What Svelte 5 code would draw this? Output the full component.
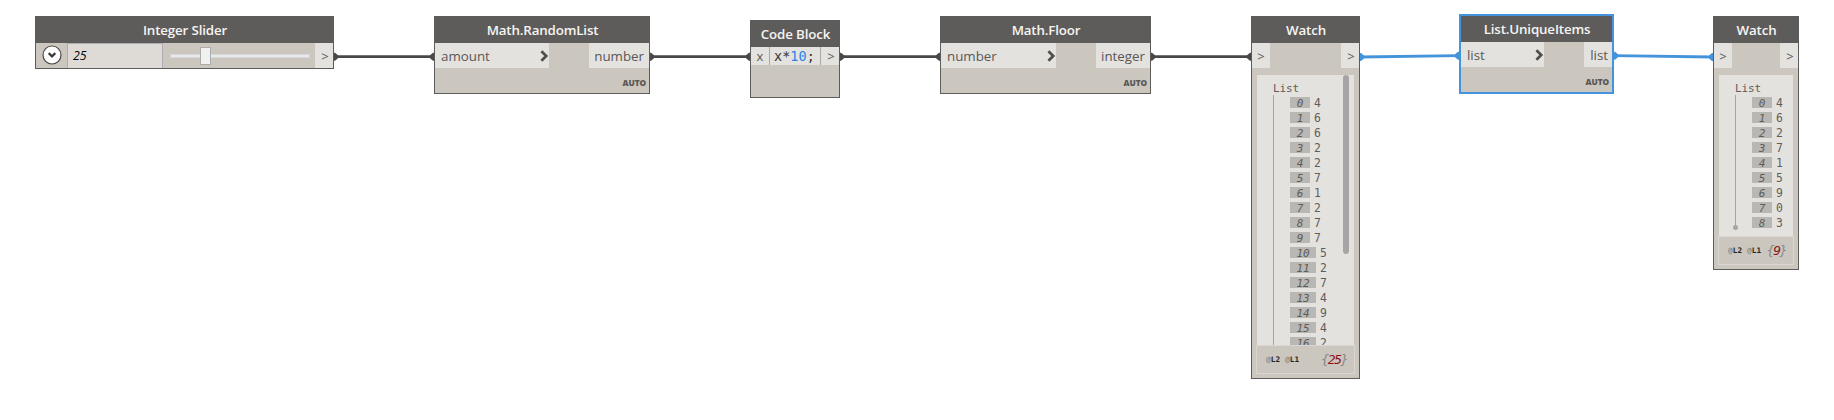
<script>
  const first = [4, 6, 6, 2, 2, 7, 1, 2, 7, 7, 5, 2, 7, 4, 9, 4, 2];
  const second = [4, 6, 2, 7, 1, 5, 9, 0, 3];
  const wires = [
    { x1: 334, y1: 56.7, x2: 434, y2: 56.7 },
    { x1: 650, y1: 56.7, x2: 750, y2: 56.7 },
    { x1: 840, y1: 56.7, x2: 940, y2: 56.7 },
    { x1: 1151, y1: 56.7, x2: 1251, y2: 56.7 },
    { x1: 1360, y1: 57, x2: 1459, y2: 55.7, active: true },
    { x1: 1614, y1: 55.7, x2: 1713, y2: 57, active: true }
  ];
  const functions = [
    { title: 'Math.RandomList', input: 'amount', output: 'number', x: 434, y: 16, w: 216, inW: 114, outW: 60 },
    { title: 'Math.Floor', input: 'number', output: 'integer', x: 940, y: 16, w: 211, inW: 115, outW: 54 },
    { title: 'List.UniqueItems', input: 'list', output: 'list', x: 1459, y: 14, w: 155, inW: 83, outW: 28, selected: true }
  ];
  const watches = [
    { x: 1251, w: 109, h: 363, items: first, count: 25, scroll: true },
    { x: 1713, w: 86, h: 254, items: second, count: 9, scroll: false }
  ];
</script>

<main>
  <svg class="wires" width="1834" height="420" viewBox="0 0 1834 420">
    {#each wires as w}
      <g stroke={w.active ? '#4494dc' : '#484848'} fill={w.active ? '#4494dc' : '#484848'}>
        <path d="M{w.x1} {w.y1}L{w.x2} {w.y2}" stroke-width="2.8" />
        <path stroke="none" d="M{w.x1} {w.y1 - 4}h1l3 2.5v3l-3 2.5h-1zM{w.x2} {w.y2 - 4}h-1l-3 2.5v3l3 2.5h1z" />
      </g>
    {/each}
  </svg>

  <section class="node" style="left:35px;top:16px;width:299px;height:53px">
    <h2>Integer Slider</h2>
    <div class="row">
      <div class="toggle">
        <svg width="20" height="20" viewBox="0 0 20 20"><circle cx="10" cy="10" r="9" fill="#fff" stroke="#4c4b49" stroke-width="1.2" /><path d="M6.7 8.1L10 11.4L13.3 8.1" fill="none" stroke="#3c3b39" stroke-width="2.2" /></svg>
      </div>
      <div class="field">25</div>
      <div class="slider"><div class="track"></div><div class="thumb"></div></div>
      <div class="port arrow out">&gt;</div>
    </div>
  </section>

  {#each functions as n}
    <section class="node" class:selected={n.selected} style="left:{n.x}px;top:{n.y}px;width:{n.w}px;height:{n.selected ? 80 : 78}px">
      <h2>{n.title}</h2>
      <div class="row between">
        <div class="port input" style="width:{n.inW}px">
          <span>{n.input}</span>
          <svg width="9" height="12" viewBox="0 0 9 12"><path d="M1.4 1.3L6.2 6L1.4 10.7" fill="none" stroke="#4f4e4c" stroke-width="2.7" /></svg>
        </div>
        <div class="port output" style="width:{n.outW}px">{n.output}</div>
      </div>
      <div class="auto">AUTO</div>
    </section>
  {/each}

  <section class="node code" style="left:750px;top:20px;width:90px;height:78px">
    <h2>Code Block</h2>
    <div class="row">
      <div class="port cell">x</div>
      <div class="editor">x*<b>10</b>;</div>
      <div class="port cell out">&gt;</div>
    </div>
  </section>

  {#each watches as n}
    <section class="node watch" style="left:{n.x}px;top:16px;width:{n.w}px;height:{n.h}px">
      <h2>Watch</h2>
      <div class="row between">
        <div class="port arrow">&gt;</div>
        <div class="port arrow out">&gt;</div>
      </div>
      <div class="panel">
        <div class="root">List</div>
        <div class="tree" class:closed={!n.scroll}>
          {#each n.items as v, i}
            <div class="item"><i class:wide={i > 9}>{i}</i><span>{v}</span></div>
          {/each}
        </div>
        {#if n.scroll}<div class="bar"></div>{/if}
      </div>
      <footer>
        <div class="levels"><span>@</span>L2 <span>@</span>L1</div>
        <div class="count"><span>&#123;</span>{n.count}<span>&#125;</span></div>
      </footer>
    </section>
  {/each}
</main>

<style>
  :global(body) { background: #fff; }
  main { position: relative; width: 1834px; height: 420px; overflow: hidden; font-family: "Open Sans", sans-serif; }
  .wires { position: absolute; left: 0; top: 0; }
  .node { position: absolute; box-sizing: border-box; display: flex; flex-direction: column; border: 1px solid #5e5c5a; background: #cbc6be; }
  .selected { border: 2px solid #4494dc; }
  h2 { margin: 0; flex: none; height: 26px; background: #5e5c5a; color: #f5f4f2; font-size: 13.33px; font-weight: 600; letter-spacing: -.15px; line-height: 27px; padding-left: 1px; text-align: center; white-space: nowrap; }
  .row { display: flex; height: 25px; flex: none; }
  .between { justify-content: space-between; }
  .port { box-sizing: border-box; flex: none; background: #e4e2de; color: #5a5856; font-size: 13.33px; line-height: 26px; white-space: nowrap; }
  .arrow { width: 18px; text-align: center; font-size: 13px; }
  .port.out { padding-left: 2px; }
  .input { display: flex; justify-content: space-between; align-items: center; padding: 0 0 0 6px; }
  .output { text-align: right; padding-right: 5px; }
  .selected .output { padding-right: 4px; }
  .auto { margin-top: 7px; padding-right: 3px; text-align: right; font-size: 8.3px; line-height: 16px; font-weight: 800; letter-spacing: -.1px; color: #5a5856; }
  .toggle { width: 31px; padding: 2px 0 0 6px; box-sizing: border-box; }
  .toggle svg { display: block; }
  .field { box-sizing: border-box; width: 96px; background: #dedbd7; border: 1px solid #abadb3; border-bottom: 0; padding-left: 5px; color: #000; font-size: 12.3px; font-style: italic; line-height: 24px; }
  .slider { width: 152px; display: grid; align-items: center; padding: 0 5px 0 7px; box-sizing: border-box; }
  .track { grid-area: 1 / 1; height: 4px; background: #e7eaea; border: 1px solid #d6d6d6; box-sizing: border-box; }
  .thumb { grid-area: 1 / 1; width: 11px; height: 18px; margin-left: 30px; background: #f0f0f0; border: 1px solid #acacac; box-sizing: border-box; }
  .code .row { height: 18px; }
  .code .cell { width: 18px; line-height: 19px; text-align: center; font-size: 13px; }
  .editor { box-sizing: border-box; flex: 1; background: #e4e2de; border: solid #aaa9a7; border-width: 0 1px; padding-left: 4px; font-family: "DejaVu Sans Mono", monospace; font-size: 13.4px; letter-spacing: .1px; line-height: 19px; color: #333; }
  .editor b { color: #2585e5; font-weight: 400; }
  .panel { flex: 1; min-height: 0; box-sizing: border-box; position: relative; margin: 7px 5px 0; padding: 7px 0 0 16px; background: #e4e2de; overflow: hidden; font-family: "DejaVu Sans Mono", monospace; font-size: 11px; color: #5f5d5a; }
  .root { height: 13px; line-height: 13px; letter-spacing: -.1px; }
  .tree { position: relative; border-left: 1px solid #a6a5a3; }
  .closed { height: 134px; box-sizing: border-box; }
  .closed::after { content: ""; position: absolute; left: -3px; bottom: -1px; width: 5px; height: 5px; border-radius: 50%; background: #a6a5a3; }
  .item { height: 15px; display: flex; align-items: center; padding-left: 16px; }
  .item i { width: 20px; height: 11px; line-height: 13px; background: #b8b7b3; text-align: center; }
  .item i.wide { width: 26px; }
  .item span { margin-left: 4px; line-height: 12px; font-size: 11.4px; }
  .bar { position: absolute; right: 5px; top: 0; width: 6px; height: 179px; border-radius: 3px; background: #a6a5a3; }
  footer { flex: none; box-sizing: border-box; height: 29px; margin: 0 4px 4px; border: 1px solid #dad7d3; display: flex; align-items: center; justify-content: space-between; padding: 0 8px 0 9px; font-family: "DejaVu Sans Mono", monospace; white-space: nowrap; }
  .levels { font-size: 7.7px; font-weight: 700; color: #222; letter-spacing: .1px; }
  .levels span { font-weight: 400; color: #777; }
  .count { font-size: 13px; font-style: italic; color: #90101a; letter-spacing: -1.4px; margin-right: -1px; padding-bottom: 1px; }
  .count span { color: #888; }
</style>
